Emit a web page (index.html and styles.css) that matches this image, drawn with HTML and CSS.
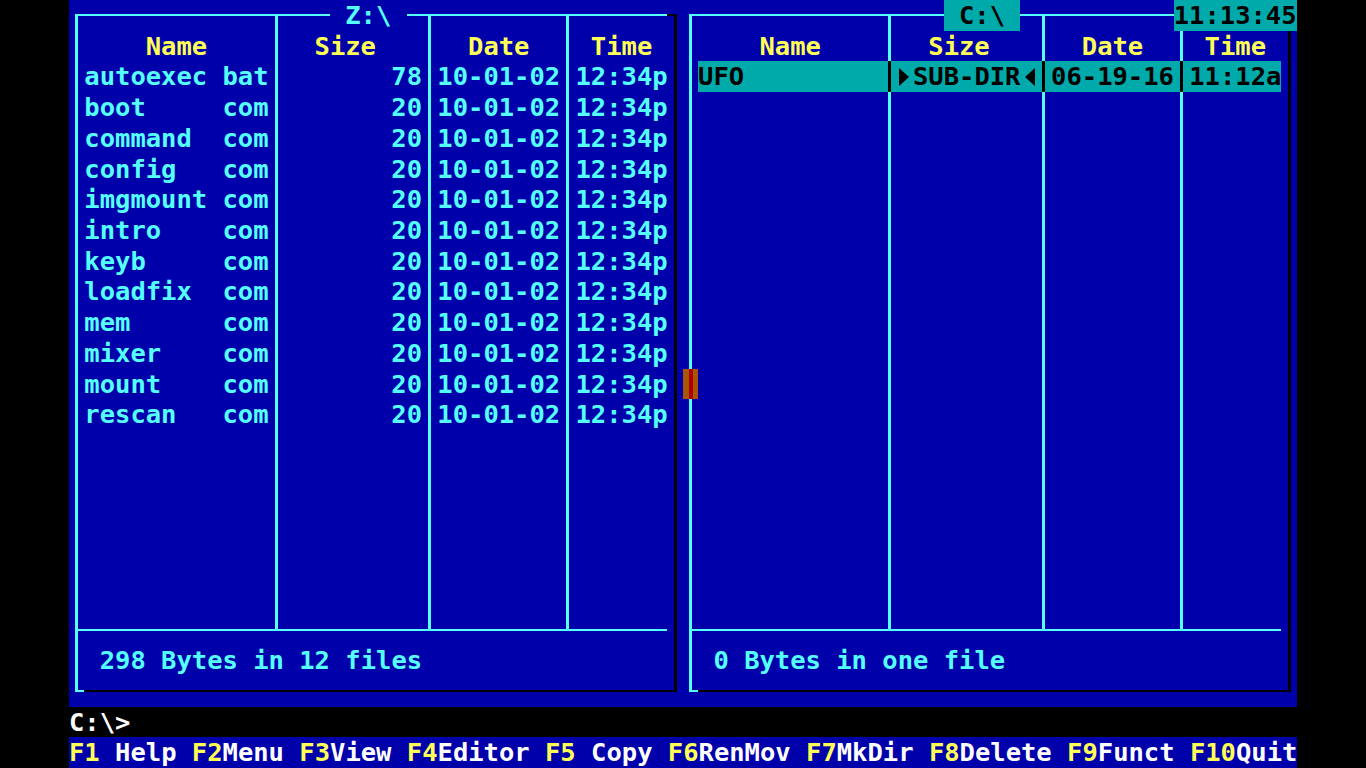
FILE: index.html
```html
<!DOCTYPE html>
<html lang="en">
<head>
    <meta charset="UTF-8">
    <title>Commander</title>
    <link rel="stylesheet" href="styles.css">
</head>
<body>
    <div class="screen">
        <div class="panels">
            <!-- Left panel: Z:\ -->
            <section class="panel">
                <div class="frame"></div>
                <div class="vline v1"></div>
                <div class="vline v2"></div>
                <div class="vline v3"></div>
                <div class="hline"></div>
                <div class="corner-tr"></div>
                <div class="corner-bl"></div>
                <div class="title"> Z:\ </div>

                <div class="list">
                    <div class="row head"><span class="name">Name</span><span class="sep"></span><span class="size">Size</span><span class="sep"></span><span class="date">Date</span><span class="sep"></span><span class="time">Time</span></div>
                    <div class="row"><span class="name"><span class="fn">autoexec</span>bat</span><span class="sep"></span><span class="size">78</span><span class="sep"></span><span class="date">10-01-02</span><span class="sep"></span><span class="time">12:34p</span></div>
                    <div class="row"><span class="name"><span class="fn">boot</span>com</span><span class="sep"></span><span class="size">20</span><span class="sep"></span><span class="date">10-01-02</span><span class="sep"></span><span class="time">12:34p</span></div>
                    <div class="row"><span class="name"><span class="fn">command</span>com</span><span class="sep"></span><span class="size">20</span><span class="sep"></span><span class="date">10-01-02</span><span class="sep"></span><span class="time">12:34p</span></div>
                    <div class="row"><span class="name"><span class="fn">config</span>com</span><span class="sep"></span><span class="size">20</span><span class="sep"></span><span class="date">10-01-02</span><span class="sep"></span><span class="time">12:34p</span></div>
                    <div class="row"><span class="name"><span class="fn">imgmount</span>com</span><span class="sep"></span><span class="size">20</span><span class="sep"></span><span class="date">10-01-02</span><span class="sep"></span><span class="time">12:34p</span></div>
                    <div class="row"><span class="name"><span class="fn">intro</span>com</span><span class="sep"></span><span class="size">20</span><span class="sep"></span><span class="date">10-01-02</span><span class="sep"></span><span class="time">12:34p</span></div>
                    <div class="row"><span class="name"><span class="fn">keyb</span>com</span><span class="sep"></span><span class="size">20</span><span class="sep"></span><span class="date">10-01-02</span><span class="sep"></span><span class="time">12:34p</span></div>
                    <div class="row"><span class="name"><span class="fn">loadfix</span>com</span><span class="sep"></span><span class="size">20</span><span class="sep"></span><span class="date">10-01-02</span><span class="sep"></span><span class="time">12:34p</span></div>
                    <div class="row"><span class="name"><span class="fn">mem</span>com</span><span class="sep"></span><span class="size">20</span><span class="sep"></span><span class="date">10-01-02</span><span class="sep"></span><span class="time">12:34p</span></div>
                    <div class="row"><span class="name"><span class="fn">mixer</span>com</span><span class="sep"></span><span class="size">20</span><span class="sep"></span><span class="date">10-01-02</span><span class="sep"></span><span class="time">12:34p</span></div>
                    <div class="row"><span class="name"><span class="fn">mount</span>com</span><span class="sep"></span><span class="size">20</span><span class="sep"></span><span class="date">10-01-02</span><span class="sep"></span><span class="time">12:34p</span></div>
                    <div class="row"><span class="name"><span class="fn">rescan</span>com</span><span class="sep"></span><span class="size">20</span><span class="sep"></span><span class="date">10-01-02</span><span class="sep"></span><span class="time">12:34p</span></div>
                </div>

                <div class="status">298 Bytes in 12 files</div>
            </section>

            <!-- Right panel: C:\ (active) -->
            <section class="panel active">
                <div class="frame"></div>
                <div class="vline v1"></div>
                <div class="vline v2"></div>
                <div class="vline v3"></div>
                <div class="hline"></div>
                <div class="corner-tr"></div>
                <div class="corner-bl"></div>
                <div class="title"> C:\ </div>
                <div class="clock">11:13:45</div>

                <div class="list">
                    <div class="row head"><span class="name">Name</span><span class="sep"></span><span class="size">Size</span><span class="sep"></span><span class="date">Date</span><span class="sep"></span><span class="time">Time</span></div>
                    <div class="row sel"><span class="name">UFO</span><span class="sep"></span><span class="size dir"><i class="tri r"></i>SUB-DIR<i class="tri l"></i></span><span class="sep"></span><span class="date">06-19-16</span><span class="sep"></span><span class="time">11:12a</span></div>
                </div>

                <div class="mouse"></div>
                <div class="status">0 Bytes in one file</div>
            </section>
        </div>

        <div class="cmd">C:\&gt;</div>
        <div class="keys"><b>F1</b> Help <b>F2</b>Menu <b>F3</b>View <b>F4</b>Editor <b>F5</b> Copy <b>F6</b>RenMov <b>F7</b>MkDir <b>F8</b>Delete <b>F9</b>Funct <b>F10</b>Quit</div>
    </div>
</body>
</html>
```

FILE: styles.css
```css
:root {
    --cw: 15.35px;
    --rh: 30.72px;
    --blue: #0000aa;
    --cyan: #55ffff;
    --yellow: #ffff55;
    --teal: #00aaaa;
    --brown: #aa5500;
    --red: #aa0000;
}

* {
    margin: 0;
    padding: 0;
    box-sizing: border-box;
}

body {
    background: #000;
    color: var(--cyan);
    font-family: "DejaVu Sans Mono", "Liberation Mono", monospace;
    font-size: 25.5px;
    font-weight: bold;
    line-height: var(--rh);
    overflow: hidden;
}

.screen {
    width: calc(80 * var(--cw));
    margin: 0 auto;
}

.panels {
    display: flex;
    background: var(--blue);
}

/* one panel = 40 x 23 character cells */
.panel {
    display: grid;
    grid-template-columns: repeat(40, var(--cw));
    grid-template-rows: repeat(23, var(--rh));
}

.frame {
    grid-area: 1 / 1 / 24 / 41;
    margin: 14px 6px 14.4px;
    border-style: solid;
    border-width: 2px 3px;
    border-color: var(--cyan) #000 #000 var(--cyan);
}

.vline {
    grid-row: 1 / 22;
    justify-self: center;
    width: 3px;
    margin: 15px 0;
    background: var(--cyan);
}

.v1 { grid-column: 14; }
.v2 { grid-column: 24; }
.v3 { grid-column: 33; }

.hline {
    grid-area: 21 / 1 / 22 / 40;
    align-self: center;
    height: 2px;
    margin-left: 6px;
    background: var(--cyan);
}

.corner-tr {
    grid-area: 1 / 40 / 2 / 41;
    align-self: start;
    height: 2px;
    margin: 14px 6px 0 0;
    background: #000;
}

.corner-bl {
    grid-area: 23 / 1 / 24 / 2;
    align-self: end;
    height: 2px;
    margin: 0 0 14.4px 6px;
    background: var(--cyan);
}

.title {
    grid-area: 1 / 18 / 2 / 23;
    white-space: pre;
    background: var(--blue);
}

.active .title {
    background: var(--teal);
    color: #000;
}

.clock {
    grid-area: 1 / 33 / 2 / 41;
    background: var(--teal);
    color: #000;
}

.list {
    grid-area: 2 / 2 / 21 / 40;
    display: flex;
    flex-direction: column;
}

.row {
    display: grid;
    grid-template-columns:
        calc(12 * var(--cw)) var(--cw)
        calc(9 * var(--cw)) var(--cw)
        calc(8 * var(--cw)) var(--cw)
        calc(6 * var(--cw));
    height: var(--rh);
}

.row span {
    white-space: pre;
}

.fn {
    display: inline-block;
    width: calc(9 * var(--cw));
}

.size {
    text-align: right;
}

.head {
    color: var(--yellow);
}

.head .name,
.head .date,
.head .time {
    text-align: center;
}

.head .size {
    text-align: left;
    padding-left: calc(2 * var(--cw));
}

.row.sel {
    background: var(--teal);
    color: #000;
}

.row.sel .sep {
    background: linear-gradient(#000, #000) center / 3px 100% no-repeat;
}

.tri {
    display: inline-flex;
    align-items: center;
    width: var(--cw);
    height: var(--rh);
    vertical-align: top;
}

.tri.r { justify-content: flex-start; padding-left: 1px; }
.tri.l { justify-content: flex-end; padding-right: 1px; }

.tri::before {
    content: "";
    border-top: 9px solid transparent;
    border-bottom: 9px solid transparent;
}

.tri.r::before { border-left: 10px solid #000; }
.tri.l::before { border-right: 10px solid #000; }

.status {
    grid-area: 22 / 3 / 23 / 40;
}

/* text-mode mouse cursor */
.mouse {
    grid-area: 13 / 1 / 14 / 2;
    background: linear-gradient(to right, var(--brown) 6px, var(--red) 6px, var(--red) 10px, var(--brown) 10px);
}

.cmd {
    height: var(--rh);
    color: #fff;
}

.keys {
    height: var(--rh);
    background: var(--blue);
    color: #fff;
    white-space: pre;
}

.keys b {
    color: var(--yellow);
}
```
